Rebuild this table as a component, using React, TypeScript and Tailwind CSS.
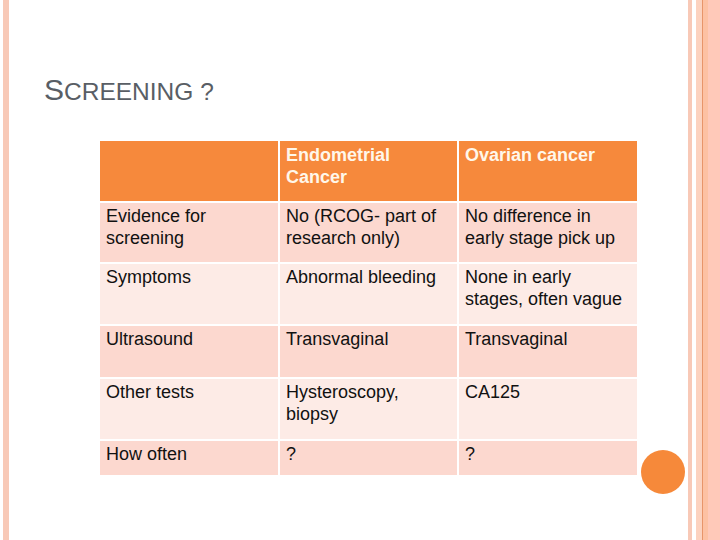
const font = { fontFamily: '"Liberation Sans", Arial, sans-serif' };

const rows: { label: string; endo: string; ovarian: string; height: string }[] = [
  {
    label: "Evidence for screening",
    endo: "No (RCOG- part of research only)",
    ovarian: "No difference in early stage pick up",
    height: "h-[59px]",
  },
  {
    label: "Symptoms",
    endo: "Abnormal bleeding",
    ovarian: "None in early stages, often vague",
    height: "h-[60px]",
  },
  { label: "Ultrasound", endo: "Transvaginal", ovarian: "Transvaginal", height: "h-[51px]" },
  {
    label: "Other tests",
    endo: "Hysteroscopy, biopsy",
    ovarian: "CA125",
    height: "h-[60px]",
  },
  { label: "How often", endo: "?", ovarian: "?", height: "h-[34px]" },
];

function Cell({ text, band, height }: { text: string; band: boolean; height: string }) {
  return (
    <div
      className={`${height} px-[6px] pt-[2px] text-[18px] leading-[22px] text-[#111] ${
        band ? "bg-[#fcd8cf]" : "bg-[#fdebe6]"
      }`}
    >
      {text}
    </div>
  );
}

export default function App() {
  return (
    <div className="flex h-[540px] w-[720px] overflow-hidden bg-white" style={font}>
      <div className="w-[3px]" />
      <div className="w-[6px] bg-[#f8c9b7]" />

      <div className="flex flex-1 flex-col">
        <div className="mt-[75px] pl-[35px] leading-none text-[30px] text-[#595e65]">
          S<span className="text-[24.5px]">CREENING ?</span>
        </div>

        <div className="mt-[36px] flex items-start">
          <div className="ml-[91px] grid grid-cols-[178px_177px_178px] content-start gap-[2px]">
            <div className="h-[60px] bg-[#f6893c]" />
            <div className="h-[60px] bg-[#f6893c] px-[6px] pt-[3px] text-[18px] font-bold leading-[22px] text-[#fff7ea]">
              Endometrial Cancer
            </div>
            <div className="h-[60px] bg-[#f6893c] px-[6px] pt-[3px] text-[18px] font-bold leading-[22px] text-[#fff7ea]">
              Ovarian cancer
            </div>
            {rows.map((r, i) => (
              <>
                <Cell key={r.label + "a"} text={r.label} band={i % 2 === 0} height={r.height} />
                <Cell key={r.label + "b"} text={r.endo} band={i % 2 === 0} height={r.height} />
                <Cell key={r.label + "c"} text={r.ovarian} band={i % 2 === 0} height={r.height} />
              </>
            ))}
          </div>
          <div className="ml-[4px] mt-[309px] h-[44px] w-[44px] shrink-0 rounded-full bg-[#f6893a]" />
        </div>
      </div>

      <div className="w-[4px] bg-[#f8c9b7]" />
      <div className="w-[4px]" />
      <div className="w-[6px] bg-[#fcd2bf]" />
      <div className="w-[1px] bg-[#e8956a]" />
      <div className="w-[5px] bg-[#fdc1a3]" />
      <div className="w-[12px] bg-[#ffc9b9]" />
    </div>
  );
}
